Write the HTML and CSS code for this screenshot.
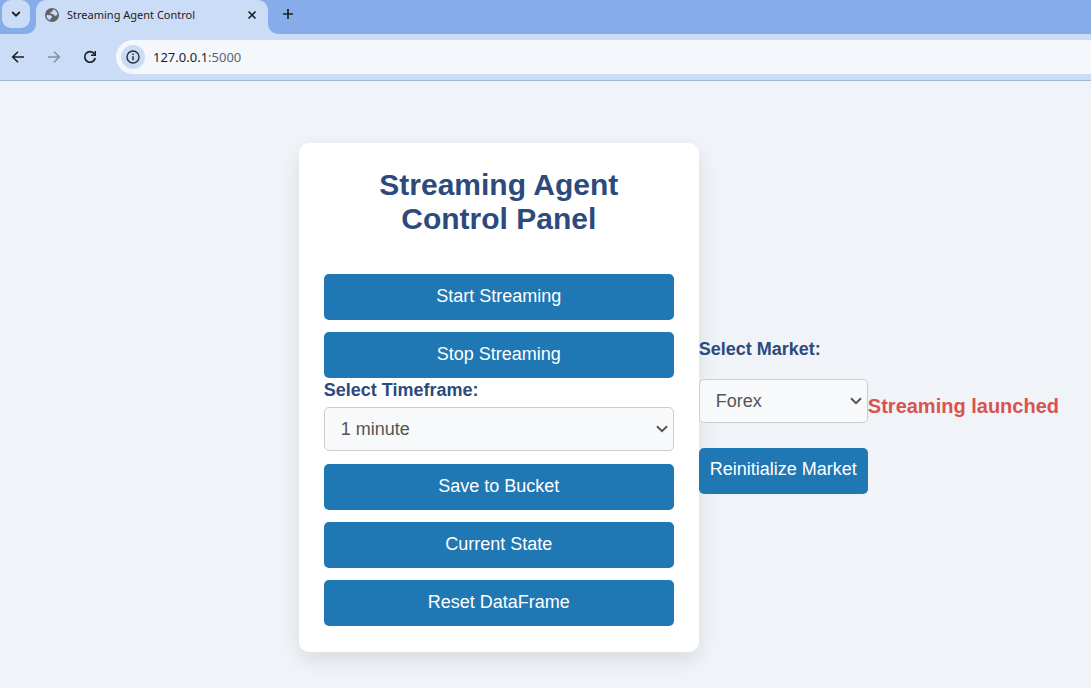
FILE: index.html
```html
<!DOCTYPE html>
<html lang="en">
<head>
<meta charset="utf-8">
<title>Streaming Agent Control</title>
<link rel="stylesheet" href="styles.css">
</head>
<body>
<header class="browser">
  <div class="tab-strip">
    <div class="tab-start">
      <button class="tab-search" aria-label="Search tabs">
        <svg width="10" height="6" viewBox="0 0 10 6"><path d="M1.2 1 5 4.7 8.8 1" fill="none" stroke="#1f2023" stroke-width="1.8"/></svg>
      </button>
    </div>
    <div class="tab">
      <svg width="14" height="14" viewBox="0 0 14 14"><circle cx="7" cy="7" r="7" fill="#5f6368"/><path d="M7.8 1.5 7.6 3.2 5.6 4.2 5.5 5.8 8.2 5.9 9 7.6 11 7.7 12.5 6.6A5.6 5.6 0 0 0 7.8 1.5ZM1.5 7 5.6 7.2 7 8.6 6.9 9.9 5.5 10.3 5.4 12.4A5.7 5.7 0 0 1 1.5 7Z" fill="#cbdcf6"/></svg>
      <span class="tab-title">Streaming Agent Control</span>
      <button class="icon-button" aria-label="Close tab">
        <svg width="10" height="10" viewBox="0 0 10 10"><path d="M1.5 1.5 8.5 8.5M8.5 1.5 1.5 8.5" stroke="#1f2023" stroke-width="1.6"/></svg>
      </button>
    </div>
    <div class="tab-end">
      <button class="icon-button" aria-label="New tab">
        <svg width="12" height="12" viewBox="0 0 12 12"><path d="M6 1V11M1 6H11" stroke="#1f2023" stroke-width="1.7"/></svg>
      </button>
    </div>
  </div>
  <nav class="toolbar" aria-label="Browser">
    <button class="icon-button" aria-label="Back">
      <svg width="14" height="14" viewBox="0 0 14 14"><path d="M13 7H2M7 1.7 1.7 7 7 12.3" fill="none" stroke="#1f2023" stroke-width="1.6"/></svg>
    </button>
    <button class="icon-button" aria-label="Forward">
      <svg width="14" height="14" viewBox="0 0 14 14"><path d="M1 7H12M7 1.7 12.3 7 7 12.3" fill="none" stroke="#8590a3" stroke-width="1.6"/></svg>
    </button>
    <button class="icon-button" aria-label="Reload">
      <svg width="14" height="14" viewBox="0 0 14 14"><path d="M11.3 3.8A5.3 5.3 0 1 0 12.2 8" fill="none" stroke="#1f2023" stroke-width="1.7"/><path d="M13 1V6H8V4.6H10.5L11.5 3.4V1Z" fill="#1f2023"/></svg>
    </button>
    <div class="address">
      <button class="site-info" aria-label="Site information">
        <svg width="14" height="14" viewBox="0 0 14 14"><circle cx="7" cy="7" r="6" fill="none" stroke="#2b2e33" stroke-width="1.4"/><path d="M7 6.2V10.2M7 3.6V5.1" stroke="#2b2e33" stroke-width="1.5"/></svg>
      </button>
      <span class="url">127.0.0.1<span class="port">:5000</span></span>
    </div>
  </nav>
</header>
<main class="page">
  <section class="card">
    <h1>Streaming Agent Control Panel</h1>
    <div class="actions">
      <button class="action">Start Streaming</button>
      <button class="action">Stop Streaming</button>
    </div>
    <div class="timeframe">
      <label for="timeframe">Select Timeframe:</label>
      <select id="timeframe"><option>1 minute</option></select>
    </div>
    <div class="actions">
      <button class="action">Save to Bucket</button>
      <button class="action">Current State</button>
      <button class="action">Reset DataFrame</button>
    </div>
  </section>
  <section class="market">
    <label for="market">Select Market:</label>
    <select id="market"><option>Forex</option></select>
    <button class="action">Reinitialize Market</button>
  </section>
  <p class="status" role="status">Streaming launched</p>
</main>
</body>
</html>
```
FILE: styles.css
```css
* { box-sizing: border-box; }

body {
  margin: 0;
  min-height: 100vh;
  background: #f0f4f8;
  font-family: "Liberation Sans", Arial, sans-serif;
}

button { border: 0; font-family: inherit; }
svg { display: block; }

.browser {
  font-family: "Noto Sans", sans-serif;
  color: #1f2023;
  background: #cbdcf6;
  border-bottom: 1px solid #a3b4d1;
}

.tab-strip { display: flex; height: 34px; background: #cbdcf6; }

.tab-start {
  width: 36px;
  padding-left: 2px;
  background: #86adea;
  border-bottom-right-radius: 10px;
}

.tab-search {
  display: grid;
  place-items: center;
  width: 28px;
  height: 28px;
  padding: 0;
  border-radius: 9px;
  background: #cbdcf6;
}

.tab {
  display: flex;
  align-items: center;
  gap: 8px;
  width: 232px;
  padding: 0 8px 5px 9px;
  background: linear-gradient(#86adea, #86adea) top / 100% 12px no-repeat;
  position: relative;
  isolation: isolate;
}

.tab::before {
  content: "";
  position: absolute;
  inset: 0;
  z-index: -1;
  border-radius: 10px 10px 0 0;
  background: #cbdcf6;
}

.tab-title { flex: 1; font-size: 11px; white-space: nowrap; }

.icon-button {
  display: grid;
  place-items: center;
  width: 16px;
  height: 16px;
  padding: 0;
  background: transparent;
}

.tab-end {
  flex: 1;
  display: flex;
  align-items: center;
  padding: 0 0 6px 12px;
  background: #86adea;
  border-bottom-left-radius: 10px;
}

.toolbar {
  display: flex;
  align-items: center;
  gap: 20px;
  height: 46px;
  padding-left: 10px;
}

.address {
  flex: 1;
  display: flex;
  align-items: center;
  gap: 8px;
  height: 34px;
  margin-left: -2px;
  padding-left: 5px;
  border-radius: 17px 0 0 17px;
  background: #f4f8fd;
}

.site-info {
  display: grid;
  place-items: center;
  width: 24px;
  height: 24px;
  padding: 0;
  border-radius: 50%;
  background: #cbdcf6;
}

.url { font-size: 13px; }
.port { color: #5f6570; }

.page {
  display: flex;
  align-items: center;
  justify-content: flex-end;
  padding: 62px 32px 0 0;
}

.card {
  width: 400px;
  padding: 25px 25px 26px;
  border-radius: 10px;
  background: #fff;
  box-shadow: 0 8px 20px rgba(0, 0, 0, 0.1);
}

h1 {
  margin: 0 0 38px;
  color: #2c4a7c;
  font-size: 30px;
  line-height: 34px;
  text-align: center;
}

.actions { display: grid; gap: 12px; }

.action {
  height: 46px;
  padding: 0 11px 2px;
  border-radius: 5px;
  background: #1f77b4;
  color: #fff;
  font-size: 18px;
}

.timeframe { display: grid; margin-bottom: 13px; }

label {
  color: #2c4a7c;
  font-size: 18px;
  font-weight: bold;
  line-height: 24px;
}

.timeframe label { margin-bottom: 5px; }

select {
  appearance: none;
  width: 100%;
  height: 44px;
  padding: 0 28px 0 16px;
  border: 1px solid #ccc;
  border-radius: 5px;
  background: #f8f9fa url("data:image/svg+xml,%3Csvg xmlns='http://www.w3.org/2000/svg' width='12' height='8'%3E%3Cpath d='M1 1.2 6 6.2 11 1.2' fill='none' stroke='%23555' stroke-width='2'/%3E%3C/svg%3E") right 5px center no-repeat;
  color: #555;
  font-family: inherit;
  font-size: 18px;
}

.market { display: grid; padding-top: 35px; }
.market select { margin: 18px 0 25px; }

.status {
  margin: 18px 0 0;
  color: #d9534f;
  font-size: 20px;
  font-weight: bold;
}
```
